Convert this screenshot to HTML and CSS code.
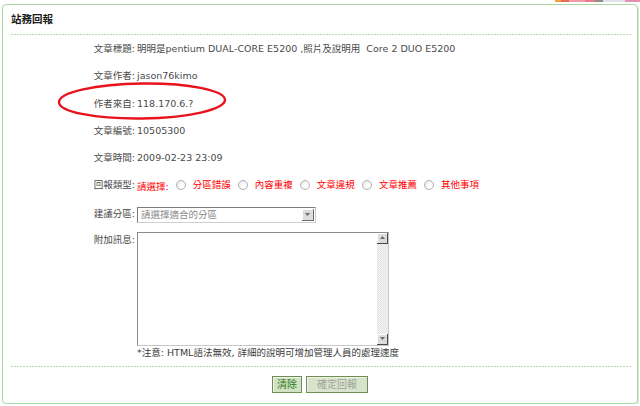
FILE: index.html
```html
<!DOCTYPE html>
<html lang="zh-Hant">
<head>
    <meta charset="UTF-8">
    <meta name="viewport" content="width=device-width, initial-scale=1.0">
    <title>站務回報</title>
    <link rel="stylesheet" href="styles.css">
</head>
<body>
    <div class="top-strip"></div>

    <div class="panel">
        <div class="panel-head">站務回報</div>
        <div class="divider"></div>

        <div class="form">
            <div class="row">
                <span class="label">文章標題:</span>
                <span class="value">明明是pentium DUAL-CORE E5200 ,照片及說明用&nbsp; Core 2 DUO E5200</span>
            </div>
            <div class="row">
                <span class="label">文章作者:</span>
                <span class="value">jason76kimo</span>
            </div>
            <div class="row">
                <span class="label">作者來自:</span>
                <span class="value">118.170.6.?</span>
            </div>
            <div class="row">
                <span class="label">文章編號:</span>
                <span class="value">10505300</span>
            </div>
            <div class="row">
                <span class="label">文章時間:</span>
                <span class="value">2009-02-23 23:09</span>
            </div>
            <div class="row">
                <span class="label">回報類型:</span>
                <span class="value types">
                    請選擇:
                    <label><input type="radio" name="type" class="radio">分區錯誤</label>
                    <label><input type="radio" name="type" class="radio">內容重複</label>
                    <label><input type="radio" name="type" class="radio">文章違規</label>
                    <label><input type="radio" name="type" class="radio">文章推薦</label>
                    <label><input type="radio" name="type" class="radio">其他事項</label>
                </span>
            </div>
            <div class="row">
                <span class="label">建議分區:</span>
                <span class="value">
                    <span class="select">
                        <span class="select-text">請選擇適合的分區</span>
                        <span class="select-arrow">
                            <svg width="5" height="3" viewBox="0 0 5 3"><path d="M0 0h5L2.5 3z" fill="#6a6a6a"/></svg>
                        </span>
                    </span>
                </span>
            </div>
            <div class="row row-top">
                <span class="label label-top">附加訊息:</span>
                <div class="value">
                    <div class="textarea-box">
                        <textarea class="textarea"></textarea>
                        <div class="scrollbar">
                            <div class="sb-btn">
                                <svg width="5" height="3" viewBox="0 0 5 3"><path d="M0 3h5L2.5 0z" fill="#6a6a6a"/></svg>
                            </div>
                            <div class="sb-track"></div>
                            <div class="sb-btn">
                                <svg width="5" height="3" viewBox="0 0 5 3"><path d="M0 0h5L2.5 3z" fill="#6a6a6a"/></svg>
                            </div>
                        </div>
                    </div>
                    <div class="note">*注意: HTML語法無效, 詳細的說明可增加管理人員的處理速度</div>
                </div>
            </div>
        </div>

        <div class="divider"></div>

        <div class="panel-foot">
            <button class="btn btn-clear">清除</button>
            <button class="btn btn-submit" disabled>確定回報</button>
        </div>
    </div>

    <!-- красный круг вокруг IP -->
    <svg class="mark" width="176" height="44" viewBox="0 0 176 44">
        <ellipse cx="87" cy="21" rx="83" ry="17.5" fill="none" stroke="#e8121c" stroke-width="2.4" transform="rotate(-0.8 87 21)"/>
    </svg>
</body>
</html>
```

FILE: styles.css
```css
body {
    margin: 0;
    font-family: "DejaVu Sans", "Noto Sans CJK TC", sans-serif;
    font-size: 9.5px;
    color: #4a4a4a;
    background: #fff;
}
.top-strip {
    position: absolute;
    top: 0;
    left: 555px;
    width: 85px;
    height: 2px;
    background: linear-gradient(90deg, #f2a23c 0 6px, #e96a52 6px 14px, #f09ab0 14px 30px, #e87a8a 30px 40px, #8c8c8c 40px 48px, #dfe3e8 48px 70px, #e391b2 70px);
}
.panel {
    margin: 4px 0 0 2px;
    width: 634px;
    border: 1px solid #a9d7a1;
    border-radius: 4px;
    box-shadow: 1px 2px 0 #d4ebcf;
}
.panel-head {
    margin: 0 6px 0 8px;
    height: 29px;
    line-height: 29px;
    font-size: 10.5px;
    font-weight: bold;
    color: #1a1a1a;
}
.divider {
    margin: 0 6px 0 8px;
    height: 1px;
    background: repeating-linear-gradient(90deg, #b3dbab 0 2px, transparent 2px 3px);
}
.row {
    display: flex;
    padding: 5px 0;
    line-height: 17.3px;
}
.row-top {
    align-items: flex-start;
    padding-top: 4px;
    padding-bottom: 6px;
}
.label {
    flex-shrink: 0;
    width: 132px;
    margin-right: 2px;
    text-align: right;
}
.label-top {
    line-height: 15px;
}
.value {
    white-space: nowrap;
}
.types {
    color: #f00;
}
.types label {
    display: inline-flex;
    align-items: center;
}
.radio {
    appearance: none;
    -webkit-appearance: none;
    width: 10px;
    height: 10px;
    margin: 0 7px 0 4px;
    border: 1px solid #b2b2b2;
    border-radius: 50%;
    background: radial-gradient(circle at 60% 60%, #fff 25%, #e0e0e0 100%);
}
.select {
    display: inline-flex;
    vertical-align: middle;
    box-sizing: border-box;
    width: 179px;
    height: 16px;
    border: 1px solid;
    border-color: #7c7c7c #cfcfcf #cfcfcf #7c7c7c;
    background: #fff;
}
.select-text {
    flex: 1;
    padding-left: 3px;
    line-height: 14px;
    color: #8a8a8a;
}
.select-arrow {
    display: flex;
    align-items: center;
    justify-content: center;
    width: 11px;
    margin: 1px;
    background: #dcdcdc;
    border-right: 1px solid #6a6a6a;
    border-bottom: 1px solid #6a6a6a;
    box-shadow: inset 1px 1px 0 #fff;
}
.textarea-box {
    display: flex;
    box-sizing: border-box;
    width: 252px;
    height: 114px;
    border: 1px solid;
    border-color: #8a8a8a #c8c8c8 #c8c8c8 #8a8a8a;
    background: #fff;
}
.textarea {
    flex: 1;
    border: none;
    outline: none;
    resize: none;
    padding: 2px;
    font: inherit;
}
.scrollbar {
    display: flex;
    flex-direction: column;
    width: 11px;
}
.sb-btn {
    display: flex;
    align-items: center;
    justify-content: center;
    height: 11px;
    background: #dcdcdc;
    border-right: 1px solid #4a4a4a;
    border-bottom: 1px solid #4a4a4a;
    box-shadow: inset 1px 1px 0 #fff;
    box-sizing: border-box;
}
.sb-track {
    flex: 1;
    background: repeating-conic-gradient(#e2e2e2 0 25%, #f5f5f5 0 50%) 0 0 / 2px 2px;
}
.note {
    line-height: 14px;
    color: #3c3c3c;
}
.panel-foot {
    padding: 9px 0 10px;
    text-align: center;
}
.btn {
    height: 17px;
    padding: 0 4px;
    font-family: inherit;
    font-size: 10px;
    line-height: 15px;
    border: 1px solid #6f8c53;
    background: #d3e1c5;
    box-shadow: inset 1px 1px 0 #eef5e8;
    color: #2c7a1c;
}
.btn-submit {
    margin-left: 1px;
    padding: 0 10px;
    color: #9ea59a;
    background: #d8e3cd;
}
.mark {
    position: absolute;
    left: 55px;
    top: 80px;
}
```
